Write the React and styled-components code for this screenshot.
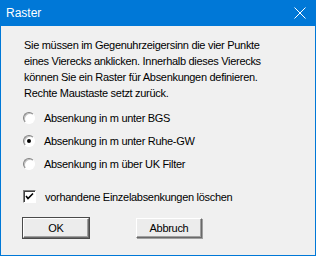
import React from 'react'
import styled, { createGlobalStyle } from 'styled-components'

const GlobalStyle = createGlobalStyle`
  html, body {
    margin: 0;
    padding: 0;
    background: #f0f0f0;
  }
`;

const Window = styled.div`
  width: 316px;
  height: 256px;
  box-sizing: border-box;
  border: 1px solid #0078d7;
  border-top: none;
  background: #f0f0f0;
  display: flex;
  flex-direction: column;
  font-family: "Liberation Sans", Arial, sans-serif;
  font-size: 11px;
  letter-spacing: -0.3px;
  color: #000;
`;

const TitleBar = styled.div`
  height: 26px;
  margin: 0 -1px;
  background: #0078d7;
  color: #fff;
  display: flex;
  align-items: center;
  justify-content: space-between;
  padding: 0 10px 0 6px;
  font-size: 12px;
  letter-spacing: 0;
`;

const Content = styled.div`
  padding: 11px 0 0 22px;
  display: flex;
  flex-direction: column;
`;

const Message = styled.p`
  margin: 0 0 0 1px;
  line-height: 16px;
`;

const OptionList = styled.div`
  margin-top: 5px;
  display: flex;
  flex-direction: column;
`;

const OptionRow = styled.label`
  height: 23px;
  display: flex;
  align-items: center;
  gap: ${p => p.$gap || 9}px;
  margin-top: ${p => p.$top || 0}px;
`;

const RadioDot = styled.span`
  width: 12px;
  height: 12px;
  box-sizing: border-box;
  border-radius: 50%;
  border: 1px solid;
  border-color: #808080 #ffffff #ffffff #808080;
  background: #fff;
  box-shadow: inset 1px 1px 0 #c0c0c0;
  display: flex;
  align-items: center;
  justify-content: center;

  &::after {
    content: '';
    width: 4px;
    height: 4px;
    border-radius: 50%;
    background: ${p => (p.$checked ? '#000' : 'transparent')};
  }
`;

const CheckBox = styled.span`
  width: 13px;
  height: 13px;
  box-sizing: border-box;
  border: 1px solid;
  border-color: #808080 #ffffff #ffffff #808080;
  box-shadow: inset 1px 1px 0 #404040;
  background: #fff;
  display: flex;
  align-items: center;
  justify-content: center;
`;

const ButtonRow = styled.div`
  margin-top: 10px;
  display: flex;
  gap: 47px;
`;

const Button = styled.button`
  width: 66px;
  height: 20px;
  box-sizing: border-box;
  padding: 0;
  font-family: inherit;
  font-size: 11px;
  letter-spacing: inherit;
  color: #000;
  background: #ececec;
  border: 1px solid;
  border-color: #ffffff #696969 #696969 #ffffff;
  box-shadow: ${p =>
    p.$default
      ? '0 0 0 1px #4a4a4a, inset -1px -1px 0 #a0a0a0'
      : 'inset -1px -1px 0 #a0a0a0, 1px 1px 0 #a0a0a0'};
`;

const Close = () => (
  <svg width="12" height="12" viewBox="0 0 12 12">
    <path d="M0.5 0.5 L11.5 11.5 M11.5 0.5 L0.5 11.5" stroke="#fff" strokeWidth="1" />
  </svg>
);

const Tick = () => (
  <svg width="9" height="9" viewBox="0 0 9 9">
    <path d="M1 4 L3 6.5 L8 1.5" stroke="#000" strokeWidth="1.6" fill="none" />
  </svg>
);

const options = [
  { text: 'Absenkung in m unter BGS', checked: false },
  { text: 'Absenkung in m unter Ruhe-GW', checked: true },
  { text: 'Absenkung in m über UK Filter', checked: false },
];

export default function App() {
  return (
    <>
      <GlobalStyle />
      <Window>
        <TitleBar>
          <span>Raster</span>
          <Close />
        </TitleBar>
        <Content>
          <Message>
            Sie müssen im Gegenuhrzeigersinn die vier Punkte<br />
            eines Vierecks anklicken. Innerhalb dieses Vierecks<br />
            können Sie ein Raster für Absenkungen definieren.<br />
            Rechte Maustaste setzt zurück.
          </Message>
          <OptionList>
            {options.map(o => (
              <OptionRow key={o.text}>
                <RadioDot $checked={o.checked} />
                <span>{o.text}</span>
              </OptionRow>
            ))}
          </OptionList>
          <OptionRow $top={10} $gap={9}>
            <CheckBox><Tick /></CheckBox>
            <span>vorhandene Einzelabsenkungen löschen</span>
          </OptionRow>
          <ButtonRow>
            <Button $default>OK</Button>
            <Button>Abbruch</Button>
          </ButtonRow>
        </Content>
      </Window>
    </>
  );
}
